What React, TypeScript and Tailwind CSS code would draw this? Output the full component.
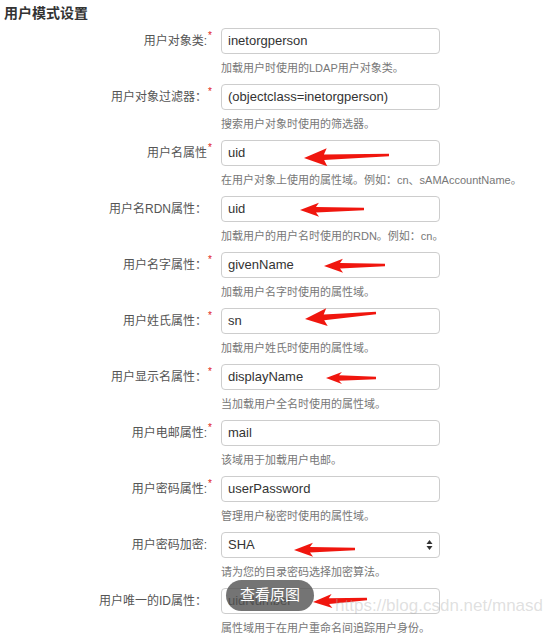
import React from "react"

type Pt = [number, number]

type Row = {
  label: string
  required?: boolean
  value: string
  help: string
  select?: boolean
  arrow?: { tip: Pt; tail: Pt; head?: number; width?: number }
}

const rows: Row[] = [
  { label: "用户对象类:", required: true, value: "inetorgperson", help: "加载用户时使用的LDAP用户对象类。" },
  { label: "用户对象过滤器：", required: true, value: "(objectclass=inetorgperson)", help: "搜索用户对象时使用的筛选器。" },
  {
    label: "用户名属性",
    required: true,
    value: "uid",
    help: "在用户对象上使用的属性域。例如：cn、sAMAccountName。",
    arrow: { tip: [82, 17], tail: [167, 14], head: 20, width: 9 },
  },
  {
    label: "用户名RDN属性：",
    value: "uid",
    help: "加载用户的用户名时使用的RDN。例如：cn。",
    arrow: { tip: [78, 13], tail: [142, 12], head: 16, width: 7 },
  },
  {
    label: "用户名字属性：",
    required: true,
    value: "givenName",
    help: "加载用户名字时使用的属性域。",
    arrow: { tip: [102, 13], tail: [163, 12], head: 16, width: 7 },
  },
  {
    label: "用户姓氏属性：",
    required: true,
    value: "sn",
    help: "加载用户姓氏时使用的属性域。",
    arrow: { tip: [83, 10], tail: [154, 4], head: 19, width: 9 },
  },
  {
    label: "用户显示名属性：",
    required: true,
    value: "displayName",
    help: "当加载用户全名时使用的属性域。",
    arrow: { tip: [104, 13], tail: [154, 13], head: 13, width: 6 },
  },
  { label: "用户电邮属性:", required: true, value: "mail", help: "该域用于加载用户电邮。" },
  { label: "用户密码属性:", required: true, value: "userPassword", help: "管理用户秘密时使用的属性域。" },
  {
    label: "用户密码加密:",
    value: "SHA",
    select: true,
    help: "请为您的目录密码选择加密算法。",
    arrow: { tip: [72, 17], tail: [133, 16], head: 16, width: 7 },
  },
  {
    label: "用户唯一的ID属性：",
    value: "uidNumber",
    help: "属性域用于在用户重命名间追踪用户身份。",
    arrow: { tip: [91, 13], tail: [145, 10], head: 16, width: 7 },
  },
]

// red hand-drawn-ish arrow, tip on the left
function arrowPath(tip: Pt, tail: Pt, head = 15, w = 6) {
  const dx = tail[0] - tip[0]
  const dy = tail[1] - tip[1]
  const len = Math.hypot(dx, dy)
  const d: Pt = [dx / len, dy / len]
  const n: Pt = [-d[1], d[0]]
  const at = (base: Pt, a: number, b: number): string =>
    `${(base[0] + d[0] * a + n[0] * b).toFixed(1)} ${(base[1] + d[1] * a + n[1] * b).toFixed(1)}`
  const s0 = 2.8
  const s1 = 1.2
  return [
    `M ${tip[0]} ${tip[1]}`,
    `L ${at(tip, head + 3, w)}`,
    `L ${at(tip, head, s0)}`,
    `L ${at(tail, 0, s1)}`,
    `L ${at(tail, 0, -s1)}`,
    `L ${at(tip, head, -s0)}`,
    `L ${at(tip, head + 3, -w)}`,
    "Z",
  ].join(" ")
}

function FormRow({ row }: { row: Row }) {
  return (
    <div className="flex items-start">
      <div className="flex h-[26px] w-[213px] shrink-0 justify-end">
        <span className="self-center text-[12px] text-[#555]">{row.label}</span>
        <span className="mt-[3px] w-[6px] pl-[1px] text-[10px] leading-none text-[#e02020]">
          {row.required ? "*" : ""}
        </span>
      </div>
      <div className="ml-[8px] w-[219px]">
        <div className="relative flex h-[26px] items-center rounded-[4px] border border-[#cdcdcd] bg-white px-[6px]">
          <span className="text-[13px] text-[#333]">{row.value}</span>
          {row.select && (
            <svg className="ml-auto" width="7" height="12" viewBox="0 0 7 12">
              <path d="M3.5 1 L6.5 5 L0.5 5 Z" fill="#333" />
              <path d="M3.5 11 L6.5 7 L0.5 7 Z" fill="#333" />
            </svg>
          )}
          {row.arrow && (
            <svg className="pointer-events-none absolute left-0 top-0 overflow-visible" width="219" height="26">
              <path
                d={arrowPath(row.arrow.tip, row.arrow.tail, row.arrow.head, row.arrow.width)}
                fill="#f0160e"
              />
            </svg>
          )}
        </div>
        <p className="mb-[9px] mt-[7px] h-[14px] whitespace-nowrap text-[11px] leading-[14px] text-[#777]">
          {row.help}
        </p>
      </div>
    </div>
  )
}

export default function App() {
  return (
    <main className="relative h-[643px] w-[552px] overflow-hidden bg-white font-['Liberation_Sans','Noto_Sans_CJK_SC',sans-serif]">
      <h1 className="flex h-[28px] items-center pb-[2px] pl-[4px] text-[14px] font-bold text-[#333]">
        用户模式设置
      </h1>
      <div className="flex flex-col">
        {rows.map((row) => (
          <FormRow key={row.label} row={row} />
        ))}
      </div>

      <div className="absolute left-[226px] top-[580px] flex h-[31px] w-[88px] items-center justify-center rounded-full bg-[rgba(85,85,85,0.82)] text-[15px] text-white">
        查看原图
      </div>

      <div className="pointer-events-none absolute right-[9px] top-[593px] text-[17px] text-[rgba(175,175,175,0.4)]">
        https://blog.csdn.net/mnasd
      </div>
    </main>
  )
}
